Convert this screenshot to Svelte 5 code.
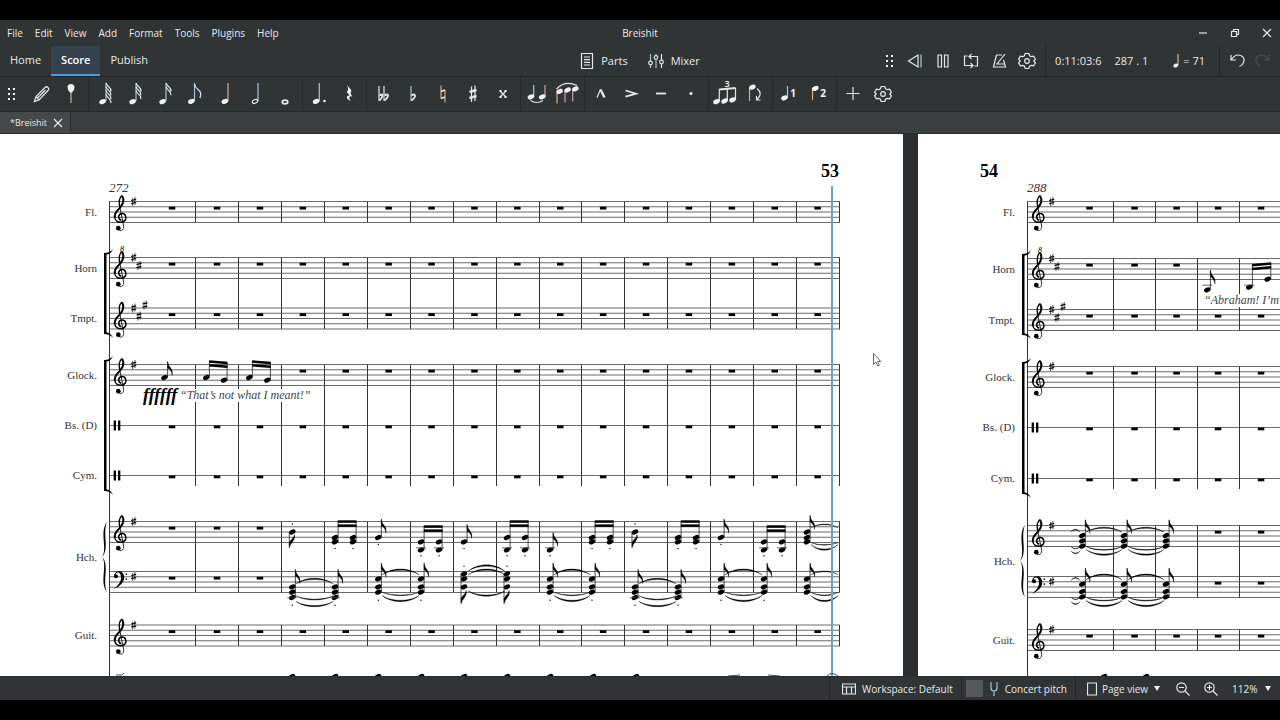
<script>
  const menus = ['File', 'Edit', 'View', 'Add', 'Format', 'Tools', 'Plugins', 'Help'];
  const sections = ['Home', 'Score', 'Publish'];

  const toolGroups = [
    ['pencil', 'pin'],
    ['note64', 'note32', 'note16', 'note8', 'note4', 'note2', 'note1'],
    ['dotted', 'rest'],
    ['dflat', 'flat', 'natural', 'sharp', 'dsharp'],
    ['tie', 'slur'],
    ['marcato', 'accent', 'tenuto', 'staccato'],
    ['tuplet', 'flip'],
    ['voice1', 'voice2'],
    ['plus', 'gear']
  ];

  const transport = ['rewind', 'pause', 'loop', 'metronome', 'gear'];

  let section = $state('Score');
  let tool = $state('');
  let concertPitch = $state(false);
  let view = $state('Page view');
  let zoom = $state('112%');

  const flags = { note64: 4, note32: 3, note16: 2 };

  // pages: all coordinates are page units, staff offsets are measured from the top line
  const GAP = 5.25;
  const range = (from, step, count) => Array.from({ length: count }, (_, i) => from + i * step);

  // chord shapes of the harp part
  const B = { ys: [10.5], down: true, tip: 26, dot: 2.5 };
  const G = { ys: [16], tip: -2.3, dot: 23 };
  const E = { ys: [20.3], tip: 3, dot: 27 };
  const LOW = { ys: [28.3], tip: 11, dot: 34.3, ledger: 26.3 };
  const PAIR_GE = { ys: [16, 20.3], beam: 0, dot: 27 };
  const PAIR_EB = { ys: [20.3, 28.3], beam: 5, dot: 34.3, ledger: 26.3 };
  const PAIR_GB = { ys: [16, 28.3], beam: 0, dot: 34.3, ledger: 26.3 };
  const BASS_A = { ys: [15.3, 20.7, 26], tip: -2, dot: 33.7, ledger: 26.3 };
  const BASS_B = { ys: [7.3, 15.3, 20.7], tip: -8.3, dot: 28.7 };
  const BASS_C = { ys: [2.3, 7.3, 15.3], down: true, tip: 32, dot: -5.3 };

  const at = (shape, x, x2) => ({ ...shape, x, x2 });
  const TIES_A = [[12.3, -4.7], [24.3, 3.7], [30, 4.5]];
  const TIES_B = [[3.3, -5], [20.7, 3], [24, 5.3]];
  const TIES_C = [[0, -5.7], [3.3, -5], [19.3, 4.7]];
  const ties = (shape, x1, x2) => shape.map(([y, h]) => ({ x1: x1 + 4, x2: x2 - 2, y, h }));

  const pages = [
    {
      number: '53', numberX: 821, measure: '272',
      bars: [195.5, 238.5, 281.5, 324.5, 367.5, 410.5, 453.5, 496.5, 539.5, 581.5, 624.5, 667.5, 710.5, 753.5, 796.5, 839.5],
      restX: [172, ...range(217, 42.9, 15)],
      end: 840,
      groups: [[67.5, 88.5], [123.5, 195], [230.5, 352], [387.5, 458.5], [491, 512]],
      brackets: [[119, 200], [226, 357]],
      brace: [388, 458],
      harpLabel: 427,
      lyric: { x: 180, y: 265, text: '“That’s not what I meant!”', mask: [142, 255, 162, 13] },
      dynamic: { x: 143, y: 267, text: 'ffffff' },
      staves: [
        { label: 'Fl.', y: 67.5, clef: 'treble', sharps: 1, rests: range(0, 1, 16) },
        { label: 'Horn', y: 123.5, clef: 'treble', octave: true, sharps: 2, rests: range(0, 1, 16) },
        { label: 'Tmpt.', y: 174, clef: 'treble', sharps: 3, rests: range(0, 1, 16) },
        {
          label: 'Glock.', y: 230.5, clef: 'treble', sharps: 1, rests: range(3, 1, 13),
          notes: [{ x: 164.5, ys: [13], tip: -3 }],
          slanted: [
            { x: 206.3, y: 13, x2: 224, y2: 15.7, beam: -3, beam2: -1.5 },
            { x: 249.3, y: 13, x2: 267.3, y2: 15.7, beam: -3, beam2: -1.5 }
          ]
        },
        { label: 'Bs. (D)', y: 291.5, clef: 'perc', rests: range(0, 1, 16) },
        { label: 'Cym.', y: 341.5, clef: 'perc', rests: range(0, 1, 16) },
        {
          y: 387.5, clef: 'treble', sharps: 1, rests: [0, 1, 2],
          notes: [
            at(B, 292.3), at(PAIR_GE, 335, 353), at(G, 378.3), at(PAIR_EB, 421, 439), at(E, 464),
            at(PAIR_GB, 507, 525), at(LOW, 550), at(PAIR_GE, 592, 610), at(B, 635), at(PAIR_GE, 678, 696),
            at(G, 721), at(PAIR_EB, 764, 782), { x: 807, ys: [10.5, 16, 20.3], tip: -6 }
          ],
          ties: ties([[6.3, -3.3], [21, 2.3], [23, 5]], 807, 840)
        },
        {
          y: 437.5, clef: 'bass', sharps: 1, rests: [0, 1, 2],
          notes: [
            at(BASS_A, 292.3), at(BASS_A, 335), at(BASS_B, 378.3), at(BASS_B, 421), at(BASS_C, 464),
            at(BASS_C, 507), at(BASS_B, 550), at(BASS_B, 592), at(BASS_A, 635), at(BASS_A, 678),
            at(BASS_B, 721), at(BASS_B, 764), { ...at(BASS_B, 807), dot: undefined }
          ],
          ties: [
            ...ties(TIES_A, 292, 335), ...ties(TIES_B, 378, 421), ...ties(TIES_C, 464, 507), ...ties(TIES_B, 550, 592),
            ...ties(TIES_A, 635, 678), ...ties(TIES_B, 721, 764), ...ties([[3.3, -3.3], [20.7, 3], [24, 5.3]], 807, 840)
          ]
        },
        { label: 'Guit.', y: 491, clef: 'treble', sharps: 1, rests: range(0, 1, 16) }
      ],
      next: range(292, 43, 9),
      playhead: 832
    },
    {
      number: '54', numberX: 62, measure: '288',
      bars: range(195.5, 42, 16),
      restX: [171.5, 216.5, 258.5, 300, 343, ...range(385, 42, 11)],
      end: 840,
      groups: [[67.5, 88.5], [124.5, 196.5], [232.5, 355], [391.5, 463.5], [495.5, 516.5]],
      brackets: [[120, 201], [228, 360]],
      brace: [391, 463],
      harpLabel: 431,
      lyric: { x: 286, y: 170, text: '“Abraham! I’m', mask: [286, 160, 76, 13] },
      staves: [
        { label: 'Fl.', y: 67.5, clef: 'treble', sharps: 1, rests: range(0, 1, 16) },
        {
          label: 'Horn', y: 124.5, clef: 'treble', octave: true, sharps: 2, rests: [0, 1, 2],
          notes: [{ x: 289.3, ys: [31.3], tip: 11.7, ledger: 26.7 }],
          slanted: [{ x: 331.3, y: 28.7, x2: 349.7, y2: 20.7, beam: 6.7, beam2: 5, ledger: 26.7 }]
        },
        { label: 'Tmpt.', y: 175.5, clef: 'treble', sharps: 3, rests: range(0, 1, 16) },
        { label: 'Glock.', y: 232.5, clef: 'treble', sharps: 1, rests: range(0, 1, 16) },
        { label: 'Bs. (D)', y: 293.5, clef: 'perc', rests: range(0, 1, 16) },
        { label: 'Cym.', y: 344.5, clef: 'perc', rests: range(0, 1, 16) },
        {
          y: 391.5, clef: 'treble', sharps: 1, rests: range(3, 1, 13),
          notes: [164.3, 206, 248].map((x) => ({ x, ys: [10, 15.3, 20.7], tip: -5.7 })),
          ties: [
            ...ties([[6.7, -4.3], [21, 3.3], [24, 5]], 164, 206), ...ties([[6.7, -4.3], [21, 3.3], [24, 5]], 206, 248),
            ...ties([[6.7, -2.5], [21, 2], [25.3, 2.5]], 149, 164)
          ]
        },
        {
          y: 442.5, clef: 'bass', sharps: 1, rests: range(3, 1, 13),
          notes: [164.3, 206, 248].map((x) => ({ x, ys: [7.7, 15, 20.3], tip: -8.3 })),
          ties: [
            ...ties([[3.3, -5], [20.7, 3.3], [24, 5.3]], 164, 206), ...ties([[3.3, -5], [20.7, 3.3], [24, 5.3]], 206, 248),
            ...ties([[4, -2.5], [20.7, 2], [25, 2.5]], 149, 164)
          ]
        },
        { label: 'Guit.', y: 495.5, clef: 'treble', sharps: 1, rests: range(0, 1, 16) }
      ],
      next: [186, 228]
    }
  ];

  const sharpPos = [[24.7, 0], [30, 8], [36, -3]];

  function tiePath({ x1, x2, y, h }) {
    const w = (x2 - x1) * 0.25;
    const c = y + h * 1.2;
    const d = y + h * 1.55;
    return `M${x1} ${y}C${x1 + w} ${d} ${x2 - w} ${d} ${x2} ${y}C${x2 - w} ${c} ${x1 + w} ${c} ${x1} ${y}Z`;
  }

  function bracePath([top, bottom]) {
    const m = (top + bottom) / 2;
    return `M107 ${top}C99 ${top + 10} 108 ${m - 8} 102 ${m}C108 ${m + 8} 99 ${bottom - 10} 107 ${bottom}` +
      `C102 ${bottom - 12} 110 ${m + 8} 102 ${m}C110 ${m - 8} 102 ${top + 12} 107 ${top}Z`;
  }
</script>

{#snippet head(x, y)}
  <ellipse cx={x} cy={y} rx="3.4" ry="2.3" transform="rotate(-24 {x} {y})" />
{/snippet}

{#snippet icon(name)}
  <svg class="icon" width="30" height="34" viewBox="0 0 30 34" aria-hidden="true">
    {#if name === 'pencil'}
      <path class="line" d="M8.500 24.500l1.500-5L19 10.500q1.500-1.500 3 0t0 3L13 23zM10 19.500l3 3.500M11.500 21l8-8" />
    {:else if name === 'pin'}
      <path d="M15 15v11" class="line warm" />
      <path d="M11.500 10.500a3.500 3.500 0 1 1 7 0q0 2.500-2.500 5h-2q-2.500-2.500-2.500-5z" />
    {:else if flags[name]}
      <path class="line cool" d="M16 6v18" />
      {@render head(12.6, 24.6)}
      {#each Array(flags[name]) as _, i}
        <path class="line" d="M16 {6 + i * 3.8}q1 2.500 3 4t2 4.500" />
      {/each}
    {:else if name === 'note8'}
      <path class="line cool" d="M14.500 6v18" />
      {@render head(11.3, 24.4)}
      <path class="line" d="M14.500 7q.5 3.500 4 6t1.500 8" />
    {:else if name === 'note4'}
      <path class="line warm" d="M18 6v18" />
      {@render head(14.8, 24.4)}
    {:else if name === 'note2'}
      <path class="line cool" d="M18 6v18" />
      <ellipse class="line" cx="15" cy="24.400" rx="2.800" ry="1.800" transform="rotate(-24 15 24.400)" />
    {:else if name === 'note1'}
      <ellipse class="line bold" cx="15" cy="25" rx="2.700" ry="1.900" />
    {:else if name === 'dotted'}
      <path class="line cool" d="M15.300 6v18" />
      {@render head(12.1, 24.4)}
      <circle cx="20.500" cy="24" r="1.300" />
    {:else if name === 'rest'}
      <path d="M13 8l4.500 5.500q-2 2.500.8 6-3.300-1-3 1.500.1 1.500 1.500 3-4-1.500-4-4 .2-2 3-1.500l-3-3.500q2.500-2.500.2-7z" />
    {:else if name === 'dflat'}
      <path class="line" d="M11 9v15M16 9v15" />
      <path class="line bold" d="M11.500 18.500q3-2 3 0t-3 5M16.500 18.500q3.500-2 3.500 0t-3.500 5" />
    {:else if name === 'flat'}
      <path class="line cool" d="M13 9v15" />
      <path class="line bold" d="M13.500 18.500q3-2 3.500 0t-3.500 5" />
    {:else if name === 'natural'}
      <path class="line warm" d="M13 8.500v13M17 13v12.500" />
      <path class="line bold" d="M13 14.500l4-1.500M13 21.500l4-1.500" />
    {:else if name === 'sharp'}
      <path class="line" d="M13.500 9.500v15.500M17 8.500v15.500" />
      <path class="line heavy" d="M11.500 15l7-2M11.500 21l7-2" />
    {:else if name === 'dsharp'}
      <path class="line" d="M12 14l6 6M18 14l-6 6" />
      <path d="M11.500 13h2v2h-2zM16.500 13h2v2h-2zM11.500 19h2v2h-2zM16.500 19h2v2h-2z" />
    {:else if name === 'tie'}
      <path class="line cool" d="M11.700 8v12" />
      <path class="line rose" d="M23 8v12" />
      {@render head(8.9, 19.8)}
      {@render head(20.2, 19.8)}
      <path class="line" d="M8.500 23.500q6 4 12.500 0" />
    {:else if name === 'slur'}
      <path class="line warm" d="M5 15v11.500" />
      <path class="line rose" d="M13 14v11.500M20.700 12v12.500" />
      {@render head(7.6, 14.4)}
      {@render head(15.6, 13)}
      {@render head(23.4, 11.8)}
      <path class="line" d="M4.500 12Q13 3 25 8.500" />
    {:else if name === 'marcato'}
      <path class="line" d="M11 20.500l3.500-8" />
      <path class="line heavy" d="M14.500 12.500l4 8" />
    {:else if name === 'accent'}
      <path class="line bold" d="M9.500 13.500l10.500 3.200-10.500 3" />
    {:else if name === 'tenuto'}
      <path class="line bold" d="M10 16.500h10" />
    {:else if name === 'staccato'}
      <circle cx="15" cy="16.500" r="1.500" />
    {:else if name === 'tuplet'}
      <path class="line" d="M9.300 12v12M17.300 12v11.500M25.500 11v11.500" />
      <path class="line bold" d="M9.300 12.500l16.200-1.500" />
      {@render head(6.5, 24.6)}
      {@render head(14.5, 24)}
      {@render head(22.5, 22.8)}
      <text x="17" y="10" class="mini">3</text>
    {:else if name === 'flip'}
      <path class="line warm" d="M9.500 11v13" />
      {@render head(12.4, 10.2)}
      <path class="line" d="M17 11.500q6.500 5 0 11M16.500 19v4h4" />
    {:else if name === 'voice1'}
      <path class="line cool" d="M13.500 9v12" />
      {@render head(10.4, 20.8)}
      <text x="19" y="20" class="voice">1</text>
    {:else if name === 'voice2'}
      <path class="line warm" d="M8.500 11v12" />
      {@render head(11.4, 11.4)}
      <text x="19" y="20" class="voice">2</text>
    {:else if name === 'plus'}
      <path class="line" d="M15 10v13M8.500 16.500h13" />
    {:else if name === 'gear'}
      <path class="line" d="M13.200 9.500h3.600l.8 2.300 1.600.9 2.400-.5 1.800 3-1.600 1.800 1.600 1.800-1.800 3-2.400-.5-1.600.9-.8 2.300h-3.600l-.8-2.300-1.600-.9-2.400.5-1.800-3L8.200 17l-1.600-1.800 1.800-3 2.400.5 1.600-.9z" />
      <circle class="line" cx="15" cy="17" r="2.300" />
    {:else if name === 'rewind'}
      <path class="line" d="M18 11v12L8.500 17z" />
      <path class="line cool" d="M21 10.500v13" />
    {:else if name === 'pause'}
      <path class="line" d="M10 11h3.500v12H10zM16.500 11H20v12h-3.500z" />
    {:else if name === 'loop'}
      <path class="line" d="M11.500 12H8.500v9.500H17M18.500 22h3v-9.500H13M15.500 10L13 12.500l2.500 2.500M14.500 19l2.500 2.500-2.500 2.500" />
    {:else if name === 'metronome'}
      <path class="line" d="M12.500 11h5.500M12.500 11L9.500 23h12L19.500 16M13 20L21 10M12 20h8" />
    {:else if name === 'undo'}
      <path class="line" d="M9 11v5h5M9.500 15.500q4-6 9-4t3 7q-1 3-4 4" />
    {:else if name === 'redo'}
      <path class="line" d="M21 11v5h-5M20.500 15.500q-4-6-9-4t-3 7q1 3 4 4" />
    {/if}
  </svg>
{/snippet}

{#snippet grip()}
  <svg class="icon" width="10" height="34" viewBox="0 0 10 34" aria-hidden="true">
    {#each [11, 16, 21] as y}
      <rect x="1" {y} width="2" height="2" />
      <rect x="6" {y} width="2" height="2" />
    {/each}
  </svg>
{/snippet}

{#snippet clef(kind, y)}
  <g transform="translate(109 {y}) scale(.3333)">
    {#if kind === 'treble'}
      <g class="pen">
        <path stroke-width="4" d="M32 15C29 0 33-13 39-18" />
        <path stroke-width="6" d="M39-17C47-4 43 8 32 20C22 30 17 35 17 47" />
        <path stroke-width="4.500" d="M17 44C17 57 27 62 36 62C49 61 53 52 50 44C47 33 31 33 29 45C29 51 32 55 37 56" />
        <path stroke-width="2.500" d="M31 10L44 74C45 84 38 89 31 87" />
      </g>
      <circle cx="28" cy="80" r="7" />
    {:else if kind === 'bass'}
      <circle cx="21" cy="14" r="6" />
      <path d="M15 14C16-2 34-5 42 5C54 24 36 44 14 52C34 38 40 22 34 8C30 0 20 2 18 12Z" />
      <circle cx="52" cy="8" r="2.500" />
      <circle cx="52" cy="23" r="2.500" />
    {:else}
      <rect x="14" y="-15" width="7" height="30" />
      <rect x="27" y="-15" width="7" height="30" />
    {/if}
  </g>
{/snippet}

{#snippet flag(x, y, down)}
  {#if down}
    <path d="M{x} {y}v-5q1-2 3-4t2-4q1.500 3-1.500 7t-3.500 6z" class="flag" />
  {:else}
    <path d="M{x} {y}q.5 4 3 6.500t1.500 7.500q0-3.500-2-5.500t-2.500-2z" class="flag" />
  {/if}
{/snippet}

{#snippet chord(n)}
  {@const xs = n.x2 ? [n.x, n.x2] : [n.x]}
  {@const low = Math.max(...n.ys)}
  {@const high = Math.min(...n.ys)}
  {#each xs as x}
    {#each n.ys as y}{@render head(x, y)}{/each}
    {#if n.ledger}<path class="staff-line" d="M{x - 5} {n.ledger}h10" />{/if}
    {#if n.dot !== undefined}<circle cx={x} cy={n.dot} r=".7" />{/if}
    {#if n.down}
      <path class="stem" d="M{x - 3} {high}V{n.tip}" />
      {@render flag(x - 3, n.tip, true)}
    {:else}
      <path class="stem" d="M{x + 3.1} {low}V{n.x2 ? n.beam : n.tip}" />
      {#if !n.x2}{@render flag(x + 3.1, n.tip, false)}{/if}
    {/if}
  {/each}
  {#if n.x2}
    <rect x={n.x + 2.8} y={n.beam - 1.2} width={n.x2 - n.x + 0.8} height="2.500" />
    <rect x={n.x + 2.8} y={n.beam + 2.9} width={n.x2 - n.x + 0.8} height="2.500" />
  {/if}
{/snippet}

{#snippet page(p)}
  <svg class="page" width="903" height="1168" viewBox="0 0 903 1168" role="img" aria-label="Page {p.number}">
    <text x={p.numberX} y="43" class="page-number">{p.number}</text>
    <text x="109" y="58" class="measure-number">{p.measure}</text>

    {#each p.groups as [top, bottom]}
      {#each p.bars as x}
        <path class="bar-line" d="M{x} {top}V{bottom}" />
      {/each}
    {/each}
    <path class="bar-line" d="M109.500 67.500V1100" />

    {#if p.lyric}
      <rect x={p.lyric.mask[0]} y={p.lyric.mask[1]} width={p.lyric.mask[2]} height={p.lyric.mask[3]} class="mask" />
      <text x={p.lyric.x} y={p.lyric.y} class="lyric">{p.lyric.text}</text>
    {/if}
    {#if p.dynamic}
      <text x={p.dynamic.x} y={p.dynamic.y} class="dynamic">{p.dynamic.text}</text>
    {/if}

    {#each p.brackets as [top, bottom]}
      <rect x="104" y={top} width="2.500" height={bottom - top} />
      <path d="M104 {top}q6 0 9-4q-2 5-6 5.500h-3zM104 {bottom}q6 0 9 4q-2-5-6-5.500h-3z" />
    {/each}
    <path d={bracePath(p.brace)} />
    <text x="97" y={p.harpLabel} class="label">Hch.</text>

    {#each p.staves as s}
      {#each s.clef === 'perc' ? [0] : [0, 1, 2, 3, 4] as i}
        <path class="staff-line" d="M109 {s.y + i * GAP}H{p.end}" />
      {/each}
      {#if s.label}
        <text x="97" y={s.y + (s.clef === 'perc' ? 3 : 14)} class="label">{s.label}</text>
      {/if}
      {@render clef(s.clef, s.y)}
      {#if s.octave}<text x="120" y={s.y - 6} class="octave">8</text>{/if}
      {#each sharpPos.slice(0, s.sharps ?? 0) as [x, y]}
        <g transform="translate({109 + x} {s.y + y + (s.clef === 'bass' ? 5 : 0)})">
          <path class="stem" d="M-1-3.500V4.500M1.200-4.500V3.500" />
          <path class="cross" d="M-2.500-1L2.500-2.200M-2.500 2.200L2.500 1" />
        </g>
      {/each}
      {#each s.rests as m}
        <rect x={p.restX[m] - 3.2} y={s.y + (s.clef === 'perc' ? 0 : GAP)} width="6.500" height="2.800" />
      {/each}
      <g transform="translate(0 {s.y})">
        {#each s.notes ?? [] as n}{@render chord(n)}{/each}
        {#each s.ties ?? [] as t}<path d={tiePath(t)} class="tie" />{/each}
        {#each s.slanted ?? [] as n}
          {@render head(n.x, n.y)}
          {@render head(n.x2, n.y2)}
          {#if n.ledger}<path class="staff-line" d="M{n.x - 5} {n.ledger}h10" />{/if}
          <path class="stem" d="M{n.x + 3.1} {n.y}V{n.beam}M{n.x2 + 3.1} {n.y2}V{n.beam2}" />
          <path class="beam" d="M{n.x + 2.8} {n.beam}L{n.x2 + 3.5} {n.beam2}M{n.x + 2.8} {n.beam + 3.8}L{n.x2 + 3.5} {n.beam2 + 3.8}" />
        {/each}
      </g>
    {/each}

    {#each p.next as x}{@render head(x, 542.5)}{/each}
    {#if p.playhead}
      <path d="M116 541l6 0 2-2M728 542l12-1M768 541l12 1" class="stem" />
      <rect x={p.playhead - 1} y="52" width="2" height="490" class="playhead" />
      <path d="M827 542q5-5 11 0" class="stem" />
      <path class="pointer" d="M873.500 219.500v11l2.500-2.500 1.800 4 1.600-.8-1.700-3.700h3z" />
    {/if}
  </svg>
{/snippet}

<div class="screen">
  <div class="app">
    <header class="title-bar">
      <nav class="menus">
        {#each menus as m}<button>{m}</button>{/each}
      </nav>
      <h1>Breishit</h1>
      <div class="window-buttons">
        <button aria-label="Minimize"><svg width="10" height="10" viewBox="0 0 10 10"><path class="line" d="M1 5h8" /></svg></button>
        <button aria-label="Restore"><svg width="10" height="10" viewBox="0 0 10 10"><path class="line" d="M1.500 3.500h5v5h-5zM3.500 3V1.500h5v5H7" /></svg></button>
        <button aria-label="Close"><svg width="10" height="10" viewBox="0 0 10 10"><path class="line" d="M1 1l8 8M9 1L1 9" /></svg></button>
      </div>
    </header>

    <div class="main-bar">
      <nav class="sections">
        {#each sections as s}
          <button class:active={section === s} onclick={() => (section = s)}>{s}</button>
        {/each}
      </nav>
      <div class="panels">
        <button>
          <svg width="14" height="18" viewBox="0 0 14 18" aria-hidden="true"><path class="line" d="M1.500 1.500h11v15h-11zM4 5h6M4 7.700h6M4 10.400h6M4 13h6" /></svg>
          Parts
        </button>
        <button>
          <svg width="16" height="18" viewBox="0 0 16 18" aria-hidden="true">
            <path class="line cool" d="M2.500 2v7M2.500 13v3M8 2v1.500M8 8v8" />
            <path class="line" d="M13.500 2v6M13.500 12v4" />
            <circle class="line" cx="2.500" cy="11" r="1.800" /><circle class="line" cx="8" cy="5.500" r="1.800" /><circle class="line" cx="13.500" cy="10" r="1.800" />
          </svg>
          Mixer
        </button>
      </div>
      <div class="playback">
        {@render grip()}
        <div class="transport">
          {#each transport as t}<button aria-label={t}>{@render icon(t)}</button>{/each}
        </div>
        <div class="readout">
          <span class="time">0:11:03:6</span>
          <span class="beat">287 . 1</span>
          <span class="tempo">
            <svg width="8" height="16" viewBox="0 0 8 16" aria-hidden="true"><path class="line warm" d="M6 1v11" /><ellipse cx="3.800" cy="12.500" rx="2.600" ry="1.800" transform="rotate(-24 3.800 12.500)" /></svg>
            = 71
          </span>
        </div>
        <div class="history">
          <button aria-label="Undo">{@render icon('undo')}</button>
          <button aria-label="Redo" disabled>{@render icon('redo')}</button>
        </div>
      </div>
    </div>

    <div class="note-bar">
      <div class="handle">{@render grip()}</div>
      {#each toolGroups as group}
        <div class="group">
          {#each group as t}
            <button aria-label={t} onclick={() => (tool = t)}>{@render icon(t)}</button>
          {/each}
        </div>
      {/each}
    </div>

    <div class="tabs">
      <div class="tab">
        <button>*Breishit</button>
        <button aria-label="Close tab"><svg width="10" height="10" viewBox="0 0 10 10"><path class="line" d="M1 1l8 8M9 1L1 9" /></svg></button>
      </div>
    </div>

    <main class="canvas">
      {#each pages as p}{@render page(p)}{/each}
    </main>

    <footer class="status">
      <button class="cell">
        <svg width="14" height="12" viewBox="0 0 14 12" aria-hidden="true"><path class="line" d="M.5 1h13v10H.5zM.5 4h13M4.500 4v7M9.500 4v7" /></svg>
        Workspace: Default
      </button>
      <label class="cell pitch">
        <input type="checkbox" bind:checked={concertPitch} />
        <svg width="10" height="16" viewBox="0 0 10 16" aria-hidden="true"><path class="line cool" d="M2 1v6q0 3 3 3t3-3V1M5 10v5" /></svg>
        Concert pitch
      </label>
      <div class="cell view">
        <svg width="10" height="14" viewBox="0 0 10 14" aria-hidden="true"><path class="line" d="M.5 1h9v12h-9z" /></svg>
        <select bind:value={view} aria-label="View mode">
          <option>Page view</option>
        </select>
        <svg class="arrow" width="6" height="5" viewBox="0 0 6 5" aria-hidden="true"><path d="M0 0h6L3 5z" /></svg>
      </div>
      <div class="zoom">
        <button aria-label="Zoom out"><svg width="14" height="14" viewBox="0 0 14 14"><circle class="line" cx="5.500" cy="5.500" r="4.700" /><path class="line" d="M9 9l4.500 4.500M3 5.500h5" /></svg></button>
        <button aria-label="Zoom in"><svg width="14" height="14" viewBox="0 0 14 14"><circle class="line" cx="5.500" cy="5.500" r="4.700" /><path class="line" d="M9 9l4.500 4.500M3 5.500h5M5.500 3v5" /></svg></button>
        <select bind:value={zoom} aria-label="Zoom">
          <option>112%</option>
        </select>
        <svg class="arrow" width="6" height="5" viewBox="0 0 6 5" aria-hidden="true"><path d="M0 0h6L3 5z" /></svg>
      </div>
    </footer>
  </div>
</div>

<style>
  :global(body) {
    background: #000;
  }

  .screen {
    height: 100vh;
    box-sizing: border-box;
    padding: 20px 0;
  }

  .app {
    height: 100%;
    display: flex;
    flex-direction: column;
    overflow: hidden;
    background: #303435;
    color: #e8eaea;
    fill: #f2f4f4;
    font-family: 'Open Sans', 'Noto Sans', sans-serif;
    font-size: 10px;
    line-height: 16px;
  }

  button,
  select {
    border: 0;
    margin: 0;
    padding: 0;
    background: none;
    color: inherit;
    font: inherit;
    white-space: nowrap;
  }

  select {
    appearance: none;
  }

  svg {
    flex-shrink: 0;
    display: block;
  }

  .line {
    fill: none;
    stroke: #e4e8e8;
    stroke-width: 1.2;
  }

  .bold {
    stroke-width: 1.8;
  }

  .heavy {
    stroke-width: 2.4;
  }

  .cool {
    stroke: #a4c6da;
  }

  .warm {
    stroke: #d3b08f;
  }

  .rose {
    stroke: #c3a5ab;
  }

  .title-bar {
    display: grid;
    grid-template-columns: 1fr auto 1fr;
    align-items: center;
    height: 26px;
  }

  .menus {
    display: flex;
    gap: 12px;
    padding-left: 7px;
  }

  h1 {
    margin: 0;
    font-size: 10px;
    font-weight: 400;
  }

  .window-buttons {
    display: flex;
    justify-content: flex-end;
    gap: 22px;
    padding-right: 8px;
  }

  .main-bar {
    display: grid;
    grid-template-columns: 1fr auto 1fr;
    grid-template-rows: 30px;
    border-bottom: 1px solid #25282a;
    font-size: 11px;
  }

  .sections {
    display: flex;
  }

  .sections button {
    padding: 0 10px;
    border-bottom: 2px solid transparent;
  }

  .sections .active {
    background: #34424f;
    border-color: #4d9ad8;
    color: #fff;
    font-weight: 600;
  }

  .panels {
    display: flex;
    gap: 20px;
  }

  .panels button {
    display: flex;
    align-items: center;
    gap: 7px;
  }

  .playback {
    display: flex;
    align-items: center;
    justify-content: flex-end;
  }

  .transport {
    display: flex;
    margin-left: 6px;
    padding-right: 4px;
    border-right: 1px solid #25282a;
  }

  .transport button {
    width: 28px;
    display: flex;
    justify-content: center;
  }

  .readout {
    display: flex;
    align-items: center;
    gap: 13px;
    padding: 0 14px 0 9px;
    border-right: 1px solid #25282a;
    line-height: 30px;
  }

  .tempo {
    display: flex;
    align-items: center;
    gap: 3px;
    margin-left: 11px;
  }

  .history {
    display: flex;
    padding: 0 4px;
  }

  .history button {
    width: 26px;
    display: flex;
    justify-content: center;
  }

  .history button:disabled {
    opacity: 0.15;
  }

  .note-bar {
    display: flex;
    height: 34px;
    border-bottom: 1px solid #25282a;
  }

  .handle {
    padding: 0 8px 0 7px;
  }

  .group {
    display: flex;
    padding: 0 2px 0 1px;
    border-right: 1px solid #272a2c;
  }

  .group:last-child {
    border: 0;
  }

  .tabs {
    display: flex;
    height: 21px;
    background: #3b3f40;
    border-bottom: 1px solid #2a2d2f;
  }

  .tab {
    display: flex;
    align-items: center;
    gap: 6px;
    padding: 0 7px 0 10px;
    background: #454849;
    border-right: 1px solid #2a2d2f;
    font-size: 9px;
  }

  .mini {
    font-size: 9px;
    font-weight: 600;
    text-anchor: middle;
  }

  .voice {
    font-size: 10px;
    font-weight: 700;
    text-anchor: middle;
  }

  .canvas {
    flex: 1;
    min-height: 0;
    display: flex;
    gap: 15px;
    overflow: hidden;
    background: #2c2f32;
  }

  .page {
    background: #fff;
    fill: #000;
    font-family: 'Liberation Serif', serif;
  }

  .page-number {
    font-size: 18px;
    font-weight: 700;
  }

  .measure-number {
    font-size: 13px;
    font-style: italic;
    fill: #333;
  }

  .label {
    font-size: 11px;
    text-anchor: end;
    fill: #333;
  }

  .lyric {
    font-size: 12px;
    font-style: italic;
    fill: #444;
  }

  .dynamic {
    font-size: 18px;
    font-weight: 700;
    font-style: italic;
  }

  .octave {
    font-size: 8px;
    font-style: italic;
  }

  .mask {
    fill: #fff;
  }

  .staff-line {
    fill: none;
    stroke: #444;
    stroke-width: 0.8;
  }

  .bar-line {
    fill: none;
    stroke: #333;
    stroke-width: 1;
  }

  .stem {
    fill: none;
    stroke: #222;
    stroke-width: 0.8;
  }

  .cross {
    fill: none;
    stroke: #000;
    stroke-width: 1.2;
  }

  .beam {
    fill: none;
    stroke: #000;
    stroke-width: 2.5;
  }

  .pen {
    fill: none;
    stroke: #000;
  }

  .flag,
  .tie {
    stroke: #000;
    stroke-width: 0.3;
  }

  .playhead {
    fill: #6fa0c4;
  }

  .pointer {
    fill: #fff;
    stroke: #444;
    stroke-width: 0.8;
  }

  .status {
    display: flex;
    justify-content: flex-end;
    height: 24px;
    border-top: 1px solid #2a2d2f;
    box-sizing: border-box;
  }

  .cell {
    display: flex;
    align-items: center;
    gap: 6px;
    padding: 0 8px 0 12px;
    border-left: 1px solid #25282a;
  }

  .pitch {
    padding: 0 8px 0 4px;
  }

  .pitch input {
    appearance: none;
    width: 17px;
    height: 17px;
    margin: 0;
    background: #555859;
  }

  .view {
    gap: 5px;
    padding: 0 16px 0 11px;
  }

  .zoom {
    display: flex;
    align-items: center;
    gap: 14px;
    padding-right: 9px;
  }

  .zoom .arrow {
    margin-left: -7px;
  }
</style>
